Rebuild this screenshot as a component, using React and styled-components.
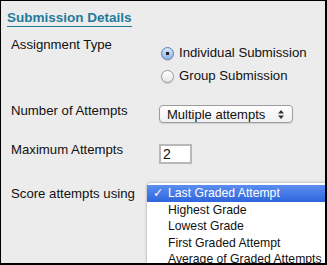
import styled, { createGlobalStyle } from "styled-components";

const Global = createGlobalStyle`
  body {
    margin: 0;
    background: #ececec;
    font-family: "Liberation Sans", Arial, sans-serif;
  }
`;

const options = [
  "Last Graded Attempt",
  "Highest Grade",
  "Lowest Grade",
  "First Graded Attempt",
  "Average of Graded Attempts",
];

export default function App() {
  return (
    <Frame>
      <Global />
      <Heading>Submission Details</Heading>
      <Form>
        <Row $height={71}>
          <Label $top={5}>Assignment Type</Label>
          <RadioGroup>
            <RadioRow>
              <Radio $checked />
              Individual Submission
            </RadioRow>
            <RadioRow>
              <Radio />
              Group Submission
            </RadioRow>
          </RadioGroup>
        </Row>
        <Row $height={39}>
          <Label $top={0}>Number of Attempts</Label>
          <Select>
            Multiple attempts
            <Arrows>
              <svg width="6" height="9" viewBox="0 0 6 9">
                <path d="M0 3.5 L3 0 L6 3.5 Z M0 5.5 L3 9 L6 5.5 Z" fill="#333" />
              </svg>
            </Arrows>
          </Select>
        </Row>
        <Row $height={44}>
          <Label $top={0}>Maximum Attempts</Label>
          <NumberBox>2</NumberBox>
        </Row>
        <Row $height={40}>
          <Label $top={0}>Score attempts using</Label>
          <MenuAnchor>
            <Menu>
              {options.map((o, i) => (
                <MenuItem key={o} $active={i === 0}>
                  <Check>{i === 0 ? "✓" : ""}</Check>
                  {o}
                </MenuItem>
              ))}
            </Menu>
          </MenuAnchor>
        </Row>
      </Form>
    </Frame>
  );
}

const Frame = styled.div`
  box-sizing: border-box;
  width: 327px;
  height: 265px;
  background: #ececec;
  border-style: solid;
  border-color: #000;
  border-width: 1px 2px 2px 1px;
  padding: 7px 0 0 6px;
  overflow: hidden;
  color: #111;
`;

const Heading = styled.div`
  display: inline-block;
  color: #1f7b9a;
  font-weight: bold;
  font-size: 13.5px;
  line-height: 14px;
  padding-bottom: 1px;
  border-bottom: 1px solid #1f7b9a;
`;

const Form = styled.div`
  display: flex;
  flex-direction: column;
  padding: 5px 0 0 4px;
`;

const Row = styled.div`
  display: grid;
  grid-template-columns: 148px 1fr;
  height: ${(p) => p.$height}px;
`;

const Label = styled.div`
  font-size: 13.2px;
  line-height: 16px;
  padding-top: ${(p) => p.$top}px;
`;

const RadioGroup = styled.div`
  display: flex;
  flex-direction: column;
  gap: 7px;
  padding-top: 13px;
`;

const RadioRow = styled.div`
  display: flex;
  align-items: center;
  gap: 5px;
  font-size: 13.2px;
  line-height: 16px;
  margin-left: 2px;
`;

const Radio = styled.span`
  box-sizing: border-box;
  width: 13px;
  height: 13px;
  border-radius: 50%;
  border: 1px solid ${(p) => (p.$checked ? "#5a7fb0" : "#9a9a9a")};
  background: ${(p) =>
    p.$checked
      ? "radial-gradient(circle, #222 0 1.6px, transparent 2px), linear-gradient(#d6e6fb, #8fb6ea)"
      : "linear-gradient(#fff, #e6e6e6)"};
  box-shadow: 0 1px 1px rgba(0, 0, 0, 0.15);
`;

const Select = styled.div`
  box-sizing: border-box;
  width: 134px;
  height: 18px;
  margin-top: 2px;
  display: flex;
  align-items: center;
  justify-content: space-between;
  padding: 0 8px 0 7px;
  font-size: 13px;
  border: 1px solid #9c9c9c;
  border-radius: 4px;
  background: linear-gradient(#ffffff, #f0f0f0);
  box-shadow: 0 1px 1px rgba(0, 0, 0, 0.12);
`;

const Arrows = styled.span`
  display: flex;
`;

const NumberBox = styled.div`
  box-sizing: border-box;
  width: 33px;
  height: 20px;
  border: 2px solid #b8b8b8;
  background: #fff;
  font-size: 14px;
  line-height: 16px;
  padding-left: 2px;
  margin-top: 2px;
`;

const MenuAnchor = styled.div`
  position: relative;
`;

const Menu = styled.div`
  position: absolute;
  left: -12px;
  top: -3px;
  width: 200px;
  padding: 2px 0;
  background: #fff;
  border-radius: 4px 0 0 0;
  box-shadow: 0 0 3px rgba(0, 0, 0, 0.35);
`;

const MenuItem = styled.div`
  display: flex;
  align-items: center;
  height: 16.5px;
  white-space: nowrap;
  font-size: 12.2px;
  color: ${(p) => (p.$active ? "#fff" : "#111")};
  background: ${(p) => (p.$active ? "linear-gradient(#5b8ef0, #2f65dc)" : "transparent")};
`;

const Check = styled.span`
  width: 21px;
  padding-left: 6px;
  box-sizing: border-box;
  font-weight: bold;
  font-family: "DejaVu Sans", sans-serif;
`;
